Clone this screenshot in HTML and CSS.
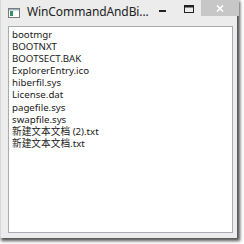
FILE: index.html
```html
<!DOCTYPE html>
<html>
<head>
<meta charset="utf-8">
<link rel="stylesheet" href="styles.css">
</head>
<body>
<div class="window">
  <div class="titlebar">
    <svg class="app-icon" width="12" height="10" viewBox="0 0 12 10">
      <rect x="0.5" y="0.5" width="11" height="9" fill="#fff" stroke="#7a7a7a"/>
      <rect x="1" y="1" width="10" height="1.5" fill="#9fb5c8"/>
      <rect x="2" y="3" width="3" height="5" fill="#3a8f6a"/>
    </svg>
    <div class="title">WinCommandAndBi...</div>
    <div class="controls">
      <div class="btn min"><svg width="7" height="2" viewBox="0 0 7 2"><rect width="7" height="2" fill="#222"/></svg></div>
      <div class="btn max"><svg width="10" height="8" viewBox="0 0 10 8"><rect x="0.5" y="0.5" width="9" height="7" fill="none" stroke="#222"/><rect x="0.5" y="0.5" width="9" height="2" fill="#222"/></svg></div>
      <div class="btn close"><svg width="8" height="7" viewBox="0 0 8 7"><path d="M1 0.5 L7 6.5 M7 0.5 L1 6.5" stroke="#fff" stroke-width="1.6"/></svg></div>
    </div>
  </div>
  <div class="client">
    <ul class="listbox">
      <li>bootmgr</li>
      <li>BOOTNXT</li>
      <li>BOOTSECT.BAK</li>
      <li>ExplorerEntry.ico</li>
      <li>hiberfil.sys</li>
      <li>License.dat</li>
      <li>pagefile.sys</li>
      <li>swapfile.sys</li>
      <li>新建文本文档 (2).txt</li>
      <li>新建文本文档.txt</li>
    </ul>
  </div>
</div>
</body>
</html>
```
FILE: styles.css
```css
html, body {
  margin: 0;
  padding: 0;
  background: #ffffff;
}
body {
  width: 244px;
  height: 244px;
  overflow: hidden;
}
.window {
  width: 237px;
  height: 238px;
  background: #ececec;
  box-shadow: 2px 2px 3px 1px rgba(40, 40, 40, 0.8);
  display: flex;
  flex-direction: column;
  box-sizing: border-box;
  border-left: 1px solid #d8d8d8;
}
.titlebar {
  height: 25px;
  display: flex;
  align-items: flex-start;
  flex-shrink: 0;
}
.app-icon {
  margin: 8px 0 0 7px;
  flex-shrink: 0;
}
.title {
  font-family: "Noto Sans", "Open Sans", sans-serif;
  font-size: 12px;
  letter-spacing: -0.1px;
  color: #222;
  margin: 3px 0 0 7px;
  line-height: 18px;
  white-space: nowrap;
}
.controls {
  display: flex;
  align-items: flex-start;
  flex-shrink: 0;
  margin-left: auto;
}
.btn {
  height: 16px;
  display: flex;
  align-items: center;
  justify-content: center;
  box-sizing: border-box;
}
.btn.min {
  width: 28px;
  padding-top: 6px;
}
.btn.max {
  width: 24px;
  padding-top: 2px;
}
.btn.close {
  width: 38px;
  background: #c7c7c7;
}
.client {
  flex: 1;
  padding: 1px 4px 5px 7px;
  display: flex;
  min-height: 0;
}
.listbox {
  flex: 1;
  margin: 0;
  padding: 2px 0 0 3px;
  list-style: none;
  background: #fff;
  border: 1px solid #a9abb2;
  font-family: "Noto Sans", "Noto Sans CJK SC", sans-serif;
  font-size: 9.7px;
  line-height: 12.1px;
  color: #1a1a1a;
}
.listbox li {
  white-space: nowrap;
  height: 12.1px;
}
```
